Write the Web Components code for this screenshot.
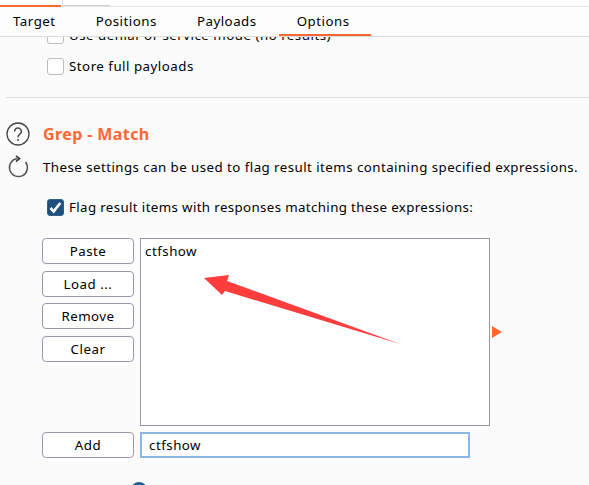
<!DOCTYPE html>
<html>
<head>
<meta charset="utf-8">
<style>
  html, body { margin: 0; height: 100%; }
  body { background: #fbfbfb; font-family: "Noto Sans", "Liberation Sans", sans-serif; color: #000; overflow: hidden; }
</style>
</head>
<body>
<burp-window>
  <burp-tabbar slot="tabs">
    <burp-tab first>Target</burp-tab>
    <burp-tab>Positions</burp-tab>
    <burp-tab>Payloads</burp-tab>
    <burp-tab active>Options</burp-tab>
  </burp-tabbar>
  <grep-options></grep-options>
</burp-window>

<script>
class BurpWindow extends HTMLElement {
  connectedCallback() {
    this.attachShadow({ mode: 'open' });
    this.shadowRoot.innerHTML = `
      <style>
        :host { display: flex; flex-direction: column; position: relative; width: 589px; height: 485px; overflow: hidden; }
        .strip { height: 7px; flex: none; display: flex; box-sizing: border-box; border-bottom: 1px solid #e4e4e4; background: #fff; }
        .strip .on { width: 61px; height: 2px; margin-top: 5px; background: #ff6633; }
        .strip .off { width: 48px; border-left: 1px solid #e4e4e4; margin-left: 1px; border-bottom: 1px solid #cfcfcf; box-sizing: border-box; }
        .body { flex: 1; min-height: 0; overflow: hidden; }
      </style>
      <div class="strip"><div class="on"></div><div class="off"></div></div>
      <slot name="tabs"></slot>
      <div class="body"><slot></slot></div>
    `;
  }
}

class BurpTabbar extends HTMLElement {
  connectedCallback() {
    this.attachShadow({ mode: 'open' });
    this.shadowRoot.innerHTML = `
      <style>
        :host { display: flex; height: 30px; box-sizing: border-box; border-bottom: 1px solid #dcdcdc; background: #fdfdfd; }
      </style>
      <slot></slot>
    `;
  }
}

class BurpTab extends HTMLElement {
  connectedCallback() {
    this.attachShadow({ mode: 'open' });
    this.shadowRoot.innerHTML = `
      <style>
        :host { display: block; box-sizing: border-box; height: 29px; padding: 0 20px; font-size: 13.3px; letter-spacing: .5px; line-height: 29px; white-space: nowrap; }
        :host([first]) { padding-left: 13px; }
        :host([active]) { margin-left: 2px; padding: 0 21px 0 18px; border-bottom: 2px solid #ff6633; }
      </style>
      <slot></slot>
    `;
  }
}

class BurpCheck extends HTMLElement {
  connectedCallback() {
    this.attachShadow({ mode: 'open' });
    const checked = this.hasAttribute('checked');
    this.shadowRoot.innerHTML = `
      <style>
        :host { display: flex; align-items: center; gap: 5px; font-size: 13.3px; letter-spacing: var(--track, .5px); line-height: 18px; white-space: nowrap; }
        .box { width: 17px; height: 17px; box-sizing: border-box; border: 1px solid #bdbdbd; border-radius: 3px; background: #fff; display: block; flex: none; }
        .box.on { background: #1f4f7d; border-color: #2f5f8d; }
        svg { display: block; }
      </style>
      <span class="box ${checked ? 'on' : ''}">
        ${checked ? '<svg viewBox="0 0 15 15" width="15" height="15"><path d="M2.500 8l3.200 3.400L12.300 3" fill="none" stroke="#fff" stroke-width="2.600"/></svg>' : ''}
      </span>
      <span><slot></slot></span>
    `;
  }
}

class BurpButton extends HTMLElement {
  connectedCallback() {
    this.attachShadow({ mode: 'open' });
    this.shadowRoot.innerHTML = `
      <style>
        :host { display: block; box-sizing: border-box; width: 92px; height: 26px; border: 1px solid #9a96a8; border-radius: 4px; background: #fff; text-align: center; font-size: 13.3px; letter-spacing: .5px; line-height: 24px; }
      </style>
      <slot></slot>
    `;
  }
}

class GrepOptions extends HTMLElement {
  connectedCallback() {
    this.attachShadow({ mode: 'open' });
    this.shadowRoot.innerHTML = `
      <style>
        :host { display: flow-root; position: relative; height: 100%; font-size: 13.3px; letter-spacing: .5px; }
        .checks { display: flex; flex-direction: column; gap: 13px; padding-left: 47px; margin-top: -11px; }
        hr { border: 0; border-top: 1px solid #dedede; margin: 22px 0 0 6px; }
        .head { display: grid; grid-template-columns: 24px 1fr; column-gap: 13px; row-gap: 9px; padding: 24px 0 0 6px; align-items: center; }
        h2 { margin: 0; font-size: 16px; font-weight: 700; color: #ff6633; letter-spacing: .4px; line-height: 24px; }
        p { margin: 0; line-height: 18px; white-space: nowrap; letter-spacing: .45px; }
        svg { display: block; }
        .flag { padding: 19px 0 0 47px; --track: .37px; }
        .grid { display: grid; grid-template-columns: 92px 350px 12px; column-gap: 6px; padding: 22px 0 0 42px; }
        .btns { display: flex; flex-direction: column; gap: 6.7px; }
        .list { box-sizing: border-box; height: 188px; border: 1px solid #9a96a8; background: #fff; padding: 2px 4px; line-height: 20px; }
        .tri { align-self: center; margin-left: -4px; width: 0; height: 0; border-left: 10px solid #ff6633; border-top: 6px solid transparent; border-bottom: 6px solid transparent; }
        .add { display: flex; gap: 6px; padding: 6px 0 0 42px; }
        .input { box-sizing: border-box; width: 330px; height: 26px; border: 2px solid #8db6e2; background: #fff; padding-left: 7px; line-height: 22px; }
        .dot { position: absolute; left: 131px; top: 445px; width: 16px; height: 16px; border-radius: 50%; background: #1f5f95; }
        .arrow { position: absolute; left: 0; top: -37px; pointer-events: none; }
      </style>
      <div class="checks">
        <burp-check>Use denial-of-service mode (no results)</burp-check>
        <burp-check>Store full payloads</burp-check>
      </div>
      <hr>
      <div class="head">
        <svg width="24" height="24" viewBox="0 0 24 24"><circle cx="12" cy="12" r="11" fill="none" stroke="#444" stroke-width="1.300"/><path d="M8.600 9.400a3.400 3.400 0 1 1 5.300 2.800c-1.300.9-1.900 1.500-1.900 3" fill="none" stroke="#444" stroke-width="1.500"/><circle cx="12" cy="18" r="1" fill="#444"/></svg>
        <h2>Grep - Match</h2>
        <svg width="24" height="24" viewBox="0 0 24 24"><path d="M11.500 3.600A9 9 0 1 0 19.500 7" fill="none" stroke="#555" stroke-width="1.500"/><path d="M10 .8L13.500 3.600L10 6.600" fill="none" stroke="#333" stroke-width="1.600"/></svg>
        <p>These settings can be used to flag result items containing specified expressions.</p>
      </div>
      <div class="flag"><burp-check checked>Flag result items with responses matching these expressions:</burp-check></div>
      <div class="grid">
        <div class="btns">
          <burp-button>Paste</burp-button>
          <burp-button>Load ...</burp-button>
          <burp-button>Remove</burp-button>
          <burp-button>Clear</burp-button>
        </div>
        <div class="list">ctfshow</div>
        <div class="tri"></div>
      </div>
      <div class="add">
        <burp-button>Add</burp-button>
        <div class="input">ctfshow</div>
      </div>
      <div class="dot"></div>
      <svg class="arrow" width="589" height="485" viewBox="0 0 589 485"><path d="M204 278L229 275L227 281L400 344L225 291L222 295Z" fill="#ff3d3d"/></svg>
    `;
  }
}

customElements.define('burp-window', BurpWindow);
customElements.define('burp-tabbar', BurpTabbar);
customElements.define('burp-tab', BurpTab);
customElements.define('burp-check', BurpCheck);
customElements.define('burp-button', BurpButton);
customElements.define('grep-options', GrepOptions);
</script>
</body>
</html>
